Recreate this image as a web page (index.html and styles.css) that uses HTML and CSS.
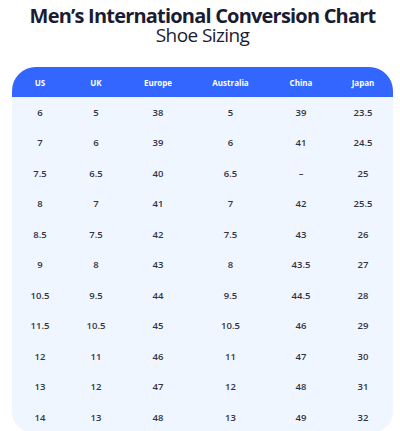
FILE: index.html
```html
<!DOCTYPE html>
<html lang="en">
<head>
    <meta charset="UTF-8">
    <meta name="viewport" content="width=device-width, initial-scale=1.0">
    <title>Men’s International Conversion Chart</title>
    <link rel="stylesheet" href="styles.css">
</head>
<body>
    <div class="chart">
        <h1 class="title">Men’s International Conversion Chart</h1>
        <h2 class="subtitle">Shoe Sizing</h2>

        <div class="table-wrap">
            <table class="size-table">
                <colgroup>
                    <col class="c-us">
                    <col class="c-uk">
                    <col class="c-eu">
                    <col class="c-au">
                    <col class="c-cn">
                    <col class="c-jp">
                </colgroup>
                <thead>
                    <tr>
                        <th>US</th>
                        <th>UK</th>
                        <th>Europe</th>
                        <th>Australia</th>
                        <th>China</th>
                        <th>Japan</th>
                    </tr>
                </thead>
                <tbody>
                    <tr><td>6</td><td>5</td><td>38</td><td>5</td><td>39</td><td>23.5</td></tr>
                    <tr><td>7</td><td>6</td><td>39</td><td>6</td><td>41</td><td>24.5</td></tr>
                    <tr><td>7.5</td><td>6.5</td><td>40</td><td>6.5</td><td>–</td><td>25</td></tr>
                    <tr><td>8</td><td>7</td><td>41</td><td>7</td><td>42</td><td>25.5</td></tr>
                    <tr><td>8.5</td><td>7.5</td><td>42</td><td>7.5</td><td>43</td><td>26</td></tr>
                    <tr><td>9</td><td>8</td><td>43</td><td>8</td><td>43.5</td><td>27</td></tr>
                    <tr><td>10.5</td><td>9.5</td><td>44</td><td>9.5</td><td>44.5</td><td>28</td></tr>
                    <tr><td>11.5</td><td>10.5</td><td>45</td><td>10.5</td><td>46</td><td>29</td></tr>
                    <tr><td>12</td><td>11</td><td>46</td><td>11</td><td>47</td><td>30</td></tr>
                    <tr><td>13</td><td>12</td><td>47</td><td>12</td><td>48</td><td>31</td></tr>
                    <tr><td>14</td><td>13</td><td>48</td><td>13</td><td>49</td><td>32</td></tr>
                </tbody>
            </table>
        </div>
    </div>
</body>
</html>
```

FILE: styles.css
```css
* {
    margin: 0;
    padding: 0;
    box-sizing: border-box;
}

body {
    font-family: 'Open Sans', 'Noto Sans', sans-serif;
    background: #ffffff;
    color: #1b1c33;
}

.chart {
    padding: 6px 7px 0 12px;
}

.title {
    font-size: 20px;
    font-weight: 700;
    line-height: 19px;
    text-align: center;
    letter-spacing: -0.8px;
    color: #1b1c33;
}

.subtitle {
    font-size: 19px;
    font-weight: 400;
    line-height: 20px;
    text-align: center;
    letter-spacing: -0.6px;
    color: #1b1c33;
}

.table-wrap {
    margin-top: 22px;
    background: #f0f6ff;
    border-radius: 24px 24px 22px 22px;
    overflow: hidden;
}

.size-table {
    width: 100%;
    border-collapse: collapse;
    table-layout: fixed;
    text-align: center;
}

.c-us { width: 56px; }
.c-uk { width: 56px; }
.c-eu { width: 68px; }
.c-au { width: 77px; }
.c-cn { width: 64px; }
.c-jp { width: 60px; }

.size-table th {
    background: #3366ff;
    color: #ffffff;
    font-size: 8px;
    font-weight: 700;
    height: 30px;
}

.size-table td {
    height: 30.5px;
    font-size: 9.5px;
    font-weight: 600;
    color: #33343f;
}
```
